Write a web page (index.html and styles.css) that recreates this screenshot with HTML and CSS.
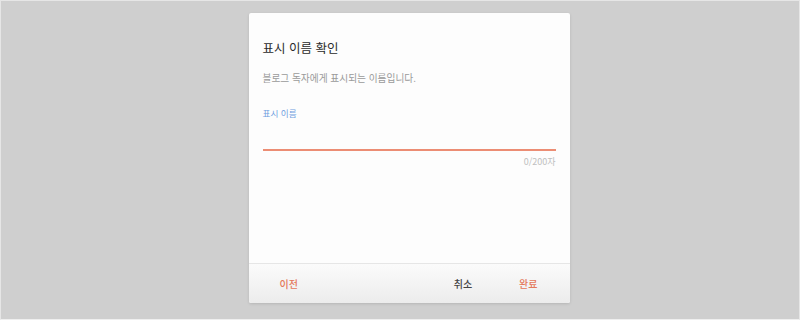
FILE: index.html
```html
<!DOCTYPE html>
<html lang="ko">
  <head>
    <meta charset="UTF-8" />
    <meta name="viewport" content="width=device-width, initial-scale=1.0">
    <title>표시 이름 확인</title>
    <link rel="stylesheet" href="styles.css">
  </head>
  <body>
    <div class="screen">
      <div class="dialog">
        <div class="dialog-body">
          <h1 class="dialog-title">표시 이름 확인</h1>
          <p class="dialog-desc">블로그 독자에게 표시되는 이름입니다.</p>

          <label class="field-label" for="displayName">표시 이름</label>
          <input id="displayName" class="field-input" type="text" maxlength="200">
          <div class="field-count">0/200자</div>
        </div>

        <div class="dialog-footer">
          <button class="btn btn-accent">이전</button>
          <span class="spacer"></span>
          <button class="btn btn-plain">취소</button>
          <button class="btn btn-accent">완료</button>
        </div>
      </div>
    </div>
  </body>
</html>
```

FILE: styles.css
```css
* {
  box-sizing: border-box;
}

body {
  margin: 0;
  font-family: 'Noto Sans CJK KR', 'Noto Sans', sans-serif;
  background: #cfcfcf;
}

.screen {
  height: 320px;
  border: 1px solid #e6e6e6;
  border-bottom-color: #efefef;
  display: flex;
  justify-content: center;
  align-items: flex-start;
  padding-top: 12px;
}

.dialog {
  width: 321px;
  height: 290px;
  margin-left: 18px;
  background: #fdfdfd;
  border-radius: 2px;
  box-shadow: 0 1px 3px rgba(0, 0, 0, 0.12);
  display: flex;
  flex-direction: column;
}

.dialog-body {
  flex: 1;
  padding: 26px 14px 0 14px;
  display: flex;
  flex-direction: column;
}

.dialog-title {
  margin: 0;
  font-size: 12.5px;
  line-height: 18px;
  font-weight: 400;
  color: #2a2a2a;
}

.dialog-desc {
  margin: 14px 0 0;
  font-size: 9.7px;
  line-height: 14px;
  color: #9a9a9a;
}

.field-label {
  margin-top: 22px;
  font-size: 8.6px;
  line-height: 12px;
  color: #6f9ee0;
}

.field-input {
  margin-top: 12px;
  height: 20px;
  border: none;
  border-bottom: 2px solid #ec8d74;
  background: transparent;
  outline: none;
  padding: 0;
  font: inherit;
}

.field-count {
  margin-top: 5px;
  text-align: right;
  font-size: 9px;
  line-height: 12px;
  color: #c0c0c0;
}

.dialog-footer {
  height: 40px;
  border-top: 1px solid #e6e6e6;
  background: linear-gradient(#fbfbfb, #ececec);
  border-radius: 0 0 2px 2px;
  display: flex;
  align-items: center;
  padding: 0 18px 0 17px;
}

.spacer {
  flex: 1;
}

.btn {
  border: none;
  background: none;
  padding: 0 14px;
  font-family: inherit;
  font-size: 10px;
  font-weight: 500;
  cursor: pointer;
}

.btn-accent {
  color: #e4785b;
}

.btn-plain {
  color: #444;
  margin-right: 19px;
}
```
